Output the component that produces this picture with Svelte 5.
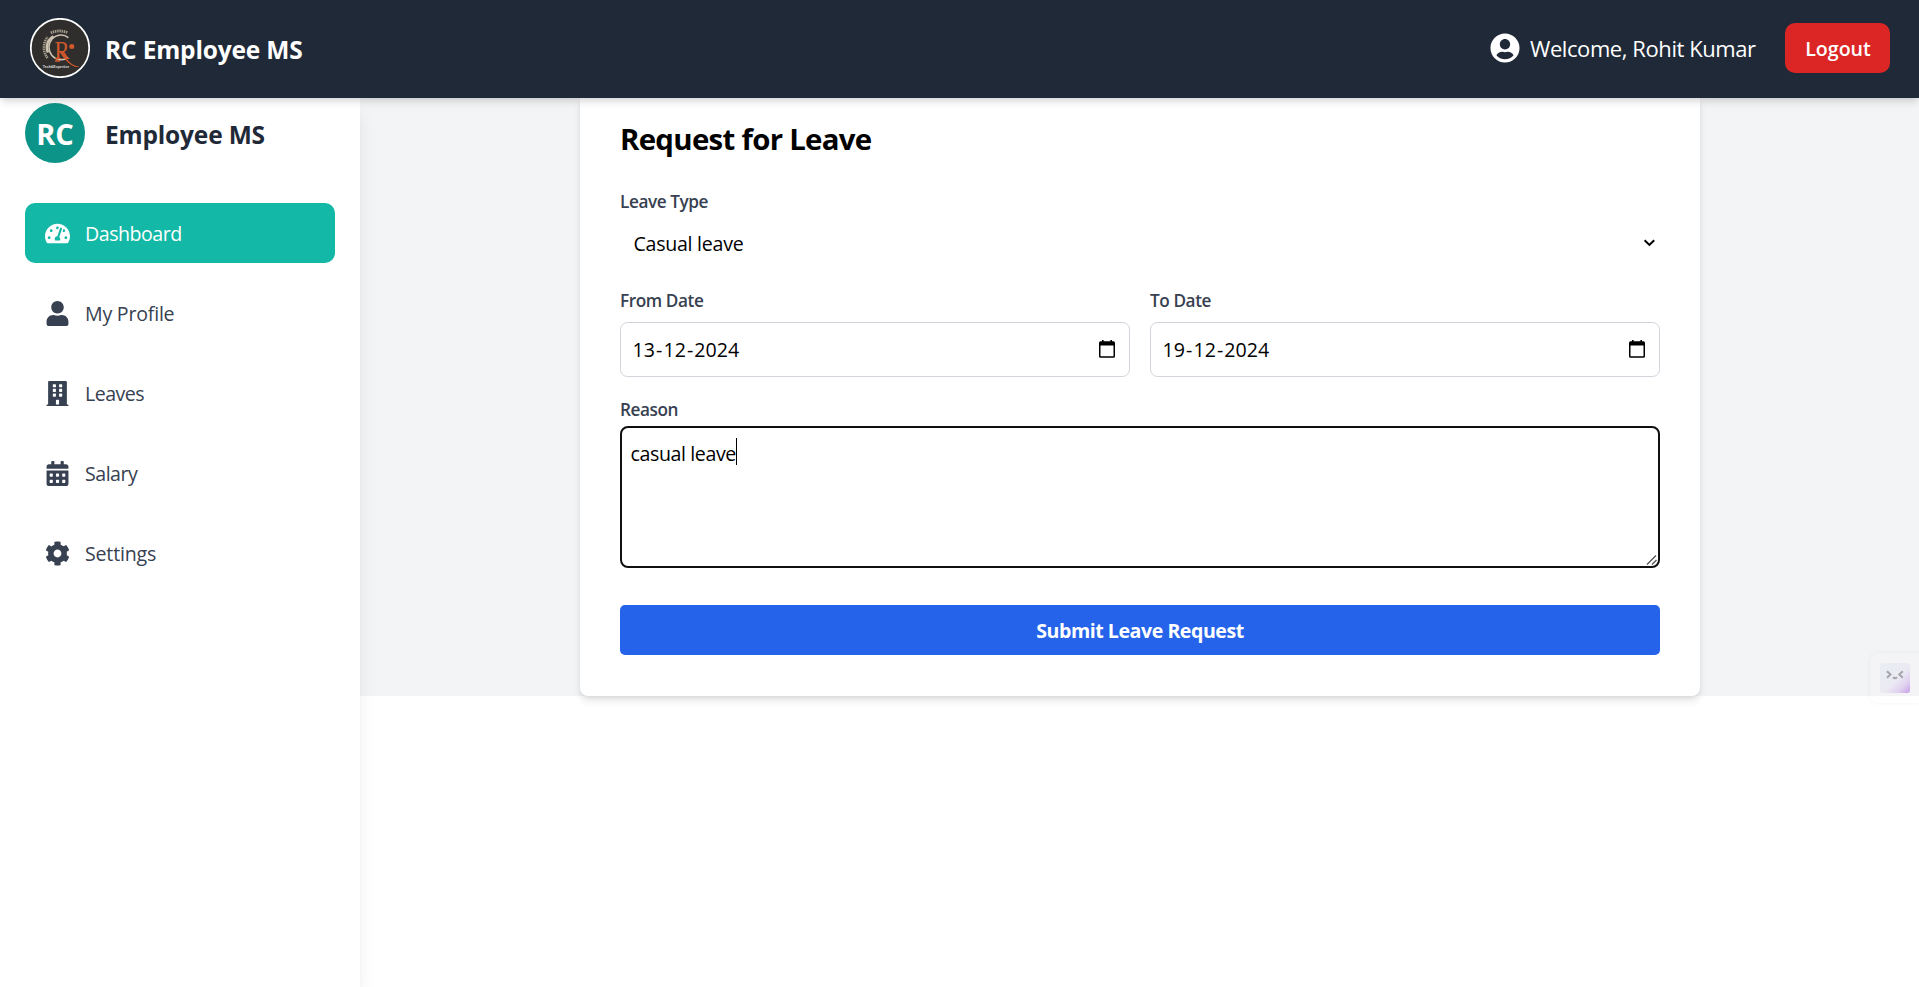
<script>
  const menu = [
    {
      label: 'Dashboard', active: true, box: '0 0 576 512', spacing: -0.48,
      d: 'M288 32C128.94 32 0 160.94 0 320c0 52.8 14.25 102.26 39.06 144.8 5.61 9.62 16.3 15.2 27.44 15.2h443c11.14 0 21.83-5.58 27.44-15.2C561.75 422.26 576 372.8 576 320c0-159.06-128.94-288-288-288zm0 64c14.71 0 26.58 10.13 30.32 23.65-1.11 2.26-2.64 4.23-3.45 6.67l-9.22 27.67c-5.13 3.49-10.97 6.01-17.64 6.01-17.67 0-32-14.33-32-32S270.33 96 288 96zM96 384c-17.67 0-32-14.33-32-32s14.33-32 32-32 32 14.33 32 32-14.33 32-32 32zm48-160c-17.67 0-32-14.33-32-32s14.33-32 32-32 32 14.33 32 32-14.33 32-32 32zm246.77-72.41l-61.33 184C343.13 347.33 352 364.54 352 384c0 11.72-3.38 22.55-8.88 32H232.88c-5.5-9.45-8.88-20.28-8.88-32 0-33.94 26.5-61.43 59.9-63.59l61.34-184.01c4.17-12.56 17.73-19.45 30.36-15.17 12.57 4.19 19.35 17.79 15.17 30.36zm14.66 57.2l15.52-46.55c3.47-1.29 7.13-2.23 11.05-2.23 17.67 0 32 14.33 32 32s-14.33 32-32 32c-11.38-.01-20.89-6.28-26.57-15.22zM480 384c-17.67 0-32-14.33-32-32s14.33-32 32-32 32 14.33 32 32-14.33 32-32 32z'
    },
    {
      label: 'My Profile', box: '0 0 448 512', spacing: -0.22,
      d: 'M224 256c70.7 0 128-57.3 128-128S294.7 0 224 0 96 57.3 96 128s57.3 128 128 128zm89.6 32h-16.7c-22.2 10.2-46.9 16-72.9 16s-50.6-5.8-72.9-16h-16.7C60.2 288 0 348.2 0 422.4V464c0 26.5 21.5 48 48 48h352c26.5 0 48-21.5 48-48v-41.6c0-74.2-60.2-134.4-134.4-134.4z'
    },
    {
      label: 'Leaves', box: '0 0 448 512', spacing: -0.55,
      d: 'M436 480h-20V24c0-13.255-10.745-24-24-24H56C42.745 0 32 10.745 32 24v456H12c-6.627 0-12 5.373-12 12v20h448v-20c0-6.627-5.373-12-12-12zM128 76c0-6.627 5.373-12 12-12h40c6.627 0 12 5.373 12 12v40c0 6.627-5.373 12-12 12h-40c-6.627 0-12-5.373-12-12V76zm0 96c0-6.627 5.373-12 12-12h40c6.627 0 12 5.373 12 12v40c0 6.627-5.373 12-12 12h-40c-6.627 0-12-5.373-12-12v-40zm52 148h-40c-6.627 0-12-5.373-12-12v-40c0-6.627 5.373-12 12-12h40c6.627 0 12 5.373 12 12v40c0 6.627-5.373 12-12 12zm76 160h-64v-84c0-6.627 5.373-12 12-12h40c6.627 0 12 5.373 12 12v84zm64-172c0 6.627-5.373 12-12 12h-40c-6.627 0-12-5.373-12-12v-40c0-6.627 5.373-12 12-12h40c6.627 0 12 5.373 12 12v40zm0-96c0 6.627-5.373 12-12 12h-40c-6.627 0-12-5.373-12-12v-40c0-6.627 5.373-12 12-12h40c6.627 0 12 5.373 12 12v40zm0-96c0 6.627-5.373 12-12 12h-40c-6.627 0-12-5.373-12-12V76c0-6.627 5.373-12 12-12h40c6.627 0 12 5.373 12 12v40z'
    },
    {
      label: 'Salary', box: '0 0 448 512', spacing: -0.5,
      d: 'M0 464c0 26.5 21.5 48 48 48h352c26.5 0 48-21.5 48-48V192H0v272zm320-196c0-6.6 5.4-12 12-12h40c6.6 0 12 5.4 12 12v40c0 6.6-5.4 12-12 12h-40c-6.6 0-12-5.4-12-12v-40zm0 128c0-6.6 5.4-12 12-12h40c6.6 0 12 5.4 12 12v40c0 6.6-5.4 12-12 12h-40c-6.6 0-12-5.4-12-12v-40zM192 268c0-6.6 5.4-12 12-12h40c6.6 0 12 5.4 12 12v40c0 6.6-5.4 12-12 12h-40c-6.6 0-12-5.4-12-12v-40zm0 128c0-6.6 5.4-12 12-12h40c6.6 0 12 5.4 12 12v40c0 6.6-5.4 12-12 12h-40c-6.6 0-12-5.4-12-12v-40zM64 268c0-6.6 5.4-12 12-12h40c6.6 0 12 5.4 12 12v40c0 6.6-5.4 12-12 12H76c-6.6 0-12-5.4-12-12v-40zm0 128c0-6.6 5.4-12 12-12h40c6.6 0 12 5.4 12 12v40c0 6.6-5.4 12-12 12H76c-6.6 0-12-5.4-12-12v-40zM400 64h-48V16c0-8.8-7.2-16-16-16h-32c-8.8 0-16 7.2-16 16v48H160V16c0-8.8-7.2-16-16-16h-32c-8.8 0-16 7.2-16 16v48H48C21.5 64 0 85.5 0 112v48h448v-48c0-26.5-21.5-48-48-48z'
    },
    {
      label: 'Settings', box: '0 0 512 512', spacing: -0.2,
      d: 'M487.4 315.7l-42.6-24.6c4.3-23.2 4.3-47 0-70.2l42.6-24.6c4.9-2.8 7.1-8.6 5.5-14-11.1-35.6-30-67.8-54.7-94.6-3.8-4.1-10-5.1-14.8-2.3L380.8 110c-17.9-15.4-38.5-27.3-60.8-35.1V25.8c0-5.6-3.9-10.5-9.4-11.7-36.7-8.2-74.3-7.8-109.2 0-5.5 1.2-9.4 6.1-9.4 11.7V75c-22.2 7.9-42.8 19.8-60.8 35.1L88.7 85.5c-4.9-2.8-11-1.9-14.8 2.3-24.7 26.7-43.6 58.9-54.7 94.6-1.7 5.4.6 11.2 5.5 14L67.3 221c-4.3 23.2-4.3 47 0 70.2l-42.6 24.6c-4.9 2.8-7.1 8.6-5.5 14 11.1 35.6 30 67.8 54.7 94.6 3.8 4.1 10 5.1 14.8 2.3l42.6-24.6c17.9 15.4 38.5 27.3 60.8 35.1v49.2c0 5.6 3.9 10.5 9.4 11.7 36.7 8.2 74.3 7.8 109.2 0 5.5-1.2 9.4-6.1 9.4-11.7v-49.2c22.2-7.9 42.8-19.8 60.8-35.1l42.6 24.6c4.9 2.8 11 1.9 14.8-2.3 24.7-26.7 43.6-58.9 54.7-94.6 1.5-5.5-.7-11.3-5.6-14.1zM256 336c-44.1 0-80-35.9-80-80s35.9-80 80-80 80 35.9 80 80-35.9 80-80 80z'
    }
  ];

  const dates = [
    { label: 'From Date', parts: ['13', '12', '2024'] },
    { label: 'To Date', parts: ['19', '12', '2024'] }
  ];
</script>

<header>
  <div class="brand">
    <svg class="logo" viewBox="0 0 60 60" aria-hidden="true">
      <circle cx="30" cy="30" r="29.2" fill="#2f2e2d" stroke="#fff" stroke-width="1.7" />
      <path d="M38.4 19.6 A12 12.4 0 1 0 38 39.400" fill="none" stroke="#cfc4b2" stroke-width="1.5" />
      <path d="M18 34.500 A12.4 12.4 0 0 1 23.500 18.300" fill="none" stroke="#cfc4b2" stroke-width="2.4" />
      <path d="M17.500 40 A17 17 0 0 1 17.600 19" fill="none" stroke="#a39a8b" stroke-width="2.6" stroke-dasharray="1.5 .7" />
      <path d="M20.800 15 A20 20 0 0 1 37.500 14.600" fill="none" stroke="#a39a8b" stroke-width="2.8" stroke-dasharray="1.5 .7" />
      <text x="24.4" y="41" class="logo-r" textLength="15" lengthAdjust="spacingAndGlyphs">R</text>
      <path d="M31.500 33.500 C36 40.500 41 48 49.5 48.6 C43 50.5 36 44 30 34.5Z" fill="#d4592a" />
      <path d="M27.300 39v4M25 43h5" stroke="#d4592a" stroke-width="1.300" />
      <circle cx="41.8" cy="28.4" r="2.5" fill="#d4592a" />
      <text x="12.8" y="49.8" class="logo-tag" textLength="26.500" lengthAdjust="spacingAndGlyphs">Tech&amp;Expertise</text>
    </svg>
    <span class="title">RC Employee MS</span>
  </div>
  <div class="account">
    <svg class="avatar" viewBox="0 0 496 512" aria-hidden="true">
      <path d="M248 8C111 8 0 119 0 256s111 248 248 248 248-111 248-248S385 8 248 8zm0 96c48.6 0 88 39.4 88 88s-39.4 88-88 88-88-39.4-88-88 39.4-88 88-88zm0 344c-58.7 0-111.3-26.6-146.5-68.2 18.8-35.4 55.6-59.8 98.5-59.8 2.4 0 4.8.4 7.1 1.1 13 4.2 26.6 6.9 40.9 6.9 14.3 0 28-2.7 40.9-6.9 2.3-.7 4.7-1.1 7.1-1.1 42.9 0 79.7 24.4 98.5 59.8C359.3 421.4 306.7 448 248 448z" />
    </svg>
    <span class="welcome">Welcome, Rohit Kumar</span>
    <button class="logout" type="button">Logout</button>
  </div>
</header>

<div class="body">
  <aside>
    <div class="side-brand">
      <span class="badge">RC</span>
      <span class="title">Employee MS</span>
    </div>
    <nav>
      {#each menu as item}
        <div class="item" class:active={item.active}>
          <svg viewBox={item.box} aria-hidden="true"><path d={item.d} /></svg>
          <span style="letter-spacing: {item.spacing}px">{item.label}</span>
        </div>
      {/each}
    </nav>
  </aside>

  <main>
    <section class="card">
      <h2>Request for Leave</h2>

      <div class="label">Leave Type</div>
      <div class="select">
        <span>Casual leave</span>
        <svg width="13" height="9" viewBox="0 0 13 9" aria-hidden="true">
          <path d="M1.6 1.2 L6.4 5.9 L11.2 1.2" fill="none" stroke="#000" stroke-width="2" />
        </svg>
      </div>

      <div class="dates">
        {#each dates as date}
          <div>
            <div class="label">{date.label}</div>
            <div class="date">
              <span class="value">{date.parts[0]}<i>-</i>{date.parts[1]}<i>-</i>{date.parts[2]}</span>
              <svg width="16" height="18" viewBox="0 0 16 18" aria-hidden="true">
                <path d="M3 0h1.6v2H3zM11.4 0H13v2h-1.6z" />
                <path fill-rule="evenodd" d="M1.5 1.2h13A1.5 1.5 0 0 1 16 2.7v13.6a1.5 1.5 0 0 1-1.5 1.5h-13A1.5 1.5 0 0 1 0 16.3V2.7A1.5 1.5 0 0 1 1.5 1.2zM1.5 5.5v10.8h13V5.5z" />
              </svg>
            </div>
          </div>
        {/each}
      </div>

      <div class="label reason">Reason</div>
      <div class="textarea">
        <span>casual leave</span><span class="caret"></span>
        <svg class="grip" width="12" height="12" viewBox="0 0 12 12" aria-hidden="true">
          <path d="M1 10.5 L10 1.5 M6 10.5 L10.5 6" stroke="#555" stroke-width="1.3" fill="none" />
        </svg>
      </div>

      <button class="submit" type="button">Submit Leave Request</button>
    </section>
  </main>
</div>

<div class="widget">
  <svg width="30" height="30" viewBox="0 0 30 30" aria-hidden="true">
    <defs>
      <linearGradient id="tile" x1="0" y1="0" x2="1" y2="1">
        <stop offset="0" stop-color="#e9eef2" />
        <stop offset=".55" stop-color="#ebeaf3" />
        <stop offset=".78" stop-color="#e0d2f0" />
        <stop offset="1" stop-color="#c89fe6" />
      </linearGradient>
    </defs>
    <rect width="30" height="30" rx="3" fill="url(#tile)" />
    <path d="M7 8.2 L10.5 11.5 L7 14.8 M22.8 8.2 L19.3 11.5 L22.8 14.8 M13 14.3 Q15 16.2 17 14.3" fill="none" stroke="#a2a5aa" stroke-width="2" />
  </svg>
</div>

<style>
  :global(body) {
    margin: 0;
    background: #fff;
    overflow: hidden;
    font-family: 'Open Sans', 'Noto Sans', sans-serif;
    font-size: 19.6px;
  }

  button {
    border: 0;
    padding: 0;
    font-family: inherit;
    color: #fff;
  }

  header {
    position: relative;
    z-index: 2;
    box-sizing: border-box;
    height: 98px;
    padding: 0 29px 2px 30px;
    display: flex;
    align-items: center;
    justify-content: space-between;
    background: #1f2937;
    color: #fff;
    box-shadow: 0 5px 8px -1px rgba(0, 0, 0, 0.12), 0 2px 5px -2px rgba(0, 0, 0, 0.1);
  }

  .brand,
  .account,
  .side-brand,
  .item {
    display: flex;
    align-items: center;
  }

  .logo {
    width: 60px;
    height: 60px;
    margin-right: 15px;
  }

  .logo-r {
    font: 25px 'Liberation Serif', serif;
    fill: #d4592a;
  }

  .logo-tag {
    font: 700 3px 'Liberation Sans', sans-serif;
    fill: #ddd;
  }

  .title {
    font-size: 24.5px;
    font-weight: 700;
    line-height: 36px;
    padding-top: 3px;
    letter-spacing: -0.17px;
  }

  .avatar {
    width: 30px;
    height: 30px;
    fill: #fff;
    margin-right: 10px;
  }

  .welcome {
    width: 255px;
    font-size: 22px;
    letter-spacing: -0.42px;
    white-space: nowrap;
  }

  .logout {
    width: 105px;
    height: 50px;
    padding: 0 0 0 1px;
    border-radius: 10px;
    background: #dc2626;
    font-size: 19.6px;
    font-weight: 600;
  }

  .body {
    display: flex;
    height: 889px;
  }

  aside {
    position: relative;
    z-index: 1;
    box-sizing: border-box;
    width: 360px;
    padding: 5px 25px 0;
    background: #fff;
    box-shadow: 0 12px 19px -4px rgba(0, 0, 0, 0.1), 0 5px 8px -5px rgba(0, 0, 0, 0.1);
  }

  .side-brand {
    color: #1f2937;
    margin-bottom: 40px;
  }

  .badge {
    width: 60px;
    height: 60px;
    margin-right: 20px;
    border-radius: 50%;
    background: #0d9488;
    color: #fff;
    font-size: 29px;
    font-weight: 700;
    line-height: 61px;
    text-align: center;
  }

  nav {
    display: grid;
    gap: 20px;
  }

  .item {
    height: 60px;
    padding-left: 20px;
    border-radius: 10px;
    color: #374151;
  }

  .item svg {
    width: 25px;
    height: 25px;
    margin-right: 15px;
    fill: currentColor;
  }

  .active {
    background: #14b8a6;
    color: #fff;
  }

  main {
    flex: 1;
    height: 598px;
    background: #f3f4f6;
    display: flex;
    justify-content: center;
  }

  .card {
    box-sizing: border-box;
    width: 1120px;
    height: 598px;
    padding: 22px 40px 40px;
    border-radius: 0 0 8px 8px;
    background: #fff;
    box-shadow: 0 5px 8px -1px rgba(0, 0, 0, 0.12), 0 2px 5px -2px rgba(0, 0, 0, 0.1);
  }

  h2 {
    margin: 0 0 31px;
    padding-left: 0.5px;
    font-size: 29.4px;
    font-weight: 700;
    line-height: 38px;
    letter-spacing: -0.7px;
    color: #000;
  }

  .label {
    padding-left: 0.5px;
    font-size: 17.2px;
    font-weight: 600;
    line-height: 25px;
    letter-spacing: -0.42px;
    color: #374151;
  }

  .select {
    box-sizing: border-box;
    height: 60px;
    margin-bottom: 14px;
    padding: 0 4px 2px 14px;
    display: flex;
    align-items: center;
    justify-content: space-between;
    letter-spacing: -0.27px;
  }

  .dates {
    display: grid;
    grid-template-columns: 1fr 1fr;
    gap: 20px;
  }

  .date {
    box-sizing: border-box;
    height: 55px;
    margin-top: 9px;
    padding: 0 14px 0 12px;
    display: flex;
    align-items: center;
    justify-content: space-between;
    border: 1px solid #d1d5db;
    border-radius: 7.5px;
  }

  .date svg {
    margin-bottom: 2px;
  }

  .date i {
    font-style: normal;
    padding: 0 1.1px;
  }

  .reason {
    margin-top: 20px;
  }

  .textarea {
    position: relative;
    box-sizing: border-box;
    height: 142px;
    margin: 4px 0 37px;
    padding: 11px 9px;
    display: flex;
    border: 2px solid #101010;
    border-radius: 8px;
    line-height: 30px;
    letter-spacing: -0.4px;
  }

  .caret {
    width: 1px;
    height: 27px;
    margin-top: -1px;
    background: #000;
  }

  .grip {
    position: absolute;
    right: 0;
    bottom: 0;
  }

  .submit {
    display: block;
    width: 100%;
    height: 50px;
    padding: 1px 0 0 1px;
    border-radius: 5px;
    background: #2563eb;
    font-size: 19.6px;
    font-weight: 700;
    letter-spacing: -0.46px;
  }

  .widget {
    position: absolute;
    z-index: 3;
    right: 0;
    top: 653px;
    box-sizing: border-box;
    width: 49px;
    height: 50px;
    padding: 10px;
    border-radius: 8px 0 0 8px;
    background: rgba(255, 255, 255, 0.08);
    box-shadow: 0 0 4px rgba(0, 0, 0, 0.05);
  }
</style>
